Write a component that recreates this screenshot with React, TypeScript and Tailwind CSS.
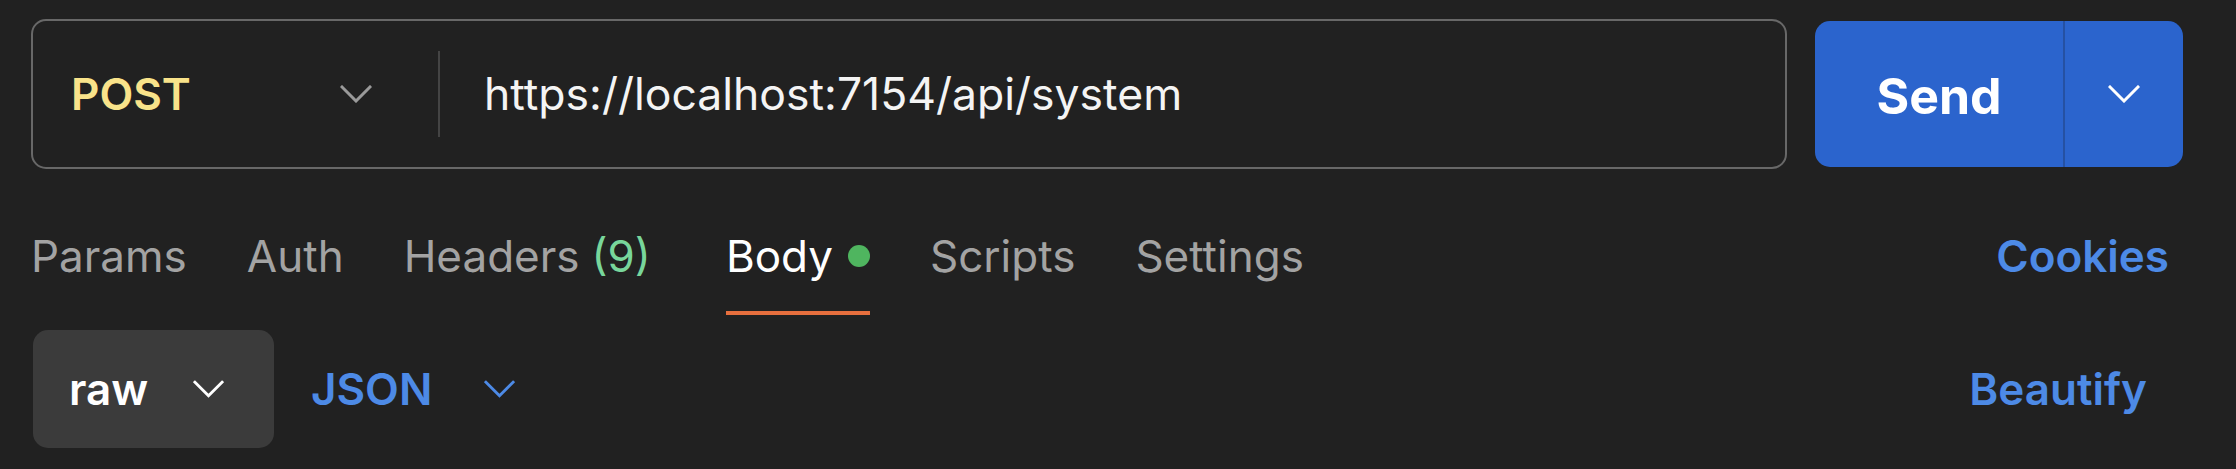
import React from "react";

function Chevron({ className }: { className?: string }) {
  return (
    <svg className={className} viewBox="0 0 32 18" fill="none" stroke="currentColor" strokeWidth={3} strokeLinecap="square">
      <polyline points="2,2 16,16 30,2" />
    </svg>
  );
}

const tabs = [
  { label: "Params" },
  { label: "Auth" },
  { label: "Headers", count: "(9)" },
  { label: "Body", active: true },
  { label: "Scripts" },
  { label: "Settings" },
];

export default function App() {
  return (
    <div
      className="min-h-screen bg-[#212121] pl-[31px] pr-[53px] pt-[19px]"
      style={{ fontFamily: "Inter, 'Noto Sans', sans-serif" }}
    >
      {/* request line */}
      <div className="flex h-[150px] items-center gap-[28px]">
        <div className="flex h-full flex-1 items-center rounded-[15px] border-2 border-[#686868] pl-[38px]">
          <div className="flex w-[301px] items-center justify-between">
            <span className="text-[44px] font-semibold leading-[52px] text-[#f9e38a]">POST</span>
            <Chevron className="w-[32px] h-[18px] text-[#9a9a9a]" />
          </div>
          <div className="ml-[66px] h-[86px] w-[2px] bg-[#444]" />
          <span className="ml-[44px] text-[44.5px] leading-[52px] text-[#f4f4f4]">
            https://localhost:7154/api/system
          </span>
        </div>
        <div className="flex h-[146px] w-[368px] overflow-hidden rounded-[15px] bg-[#2b64cd]">
          <div className="flex w-[248px] items-center justify-center pt-[3px]">
            <span className="text-[50px] font-bold leading-[56px] text-white">Send</span>
          </div>
          <div className="w-[2px] bg-[#2551a3]" />
          <div className="flex flex-1 items-center justify-center">
            <Chevron className="w-[32px] h-[18px] text-white" />
          </div>
        </div>
      </div>

      {/* tabs */}
      <div className="mt-[61px] flex items-start justify-between">
        <div className="flex gap-[60px]">
          {tabs.map((t) => (
            <div key={t.label} className={`flex flex-col ${t.count ? "mr-[15px]" : ""}`}>
              <div className="flex items-center text-[44px] leading-[52px]">
                <span className={t.active ? "text-white" : "text-[#a3a3a3]"}>{t.label}</span>
                {t.count && <span className="ml-[12px] text-[#78d69b]">{t.count}</span>}
                {t.active && <span className="ml-[15px] h-[22px] w-[22px] rounded-full bg-[#4fb55f]" />}
              </div>
              <div className={`mt-[29px] h-[4px] ${t.active ? "bg-[#e76f3e]" : ""}`} />
            </div>
          ))}
        </div>
        <span className="mr-[14px] text-[44px] font-semibold leading-[52px] text-[#4d8ae6]">Cookies</span>
      </div>

      {/* body options */}
      <div className="mt-[15px] flex items-center justify-between">
        <div className="flex items-center">
          <div className="ml-[2px] flex h-[118px] w-[241px] items-center justify-between rounded-[15px] bg-[#3b3b3b] pl-[36px] pr-[50px]">
            <span className="text-[44px] font-semibold leading-[52px] text-white">raw</span>
            <Chevron className="w-[31px] h-[18px] text-white" />
          </div>
          <span className="ml-[37px] text-[44px] font-semibold leading-[52px] text-[#4d8ae6]">JSON</span>
          <Chevron className="ml-[52px] w-[31px] h-[18px] text-[#4d8ae6]" />
        </div>
        <span className="mr-[36px] text-[44px] font-semibold leading-[52px] text-[#4d8ae6]">Beautify</span>
      </div>
    </div>
  );
}
